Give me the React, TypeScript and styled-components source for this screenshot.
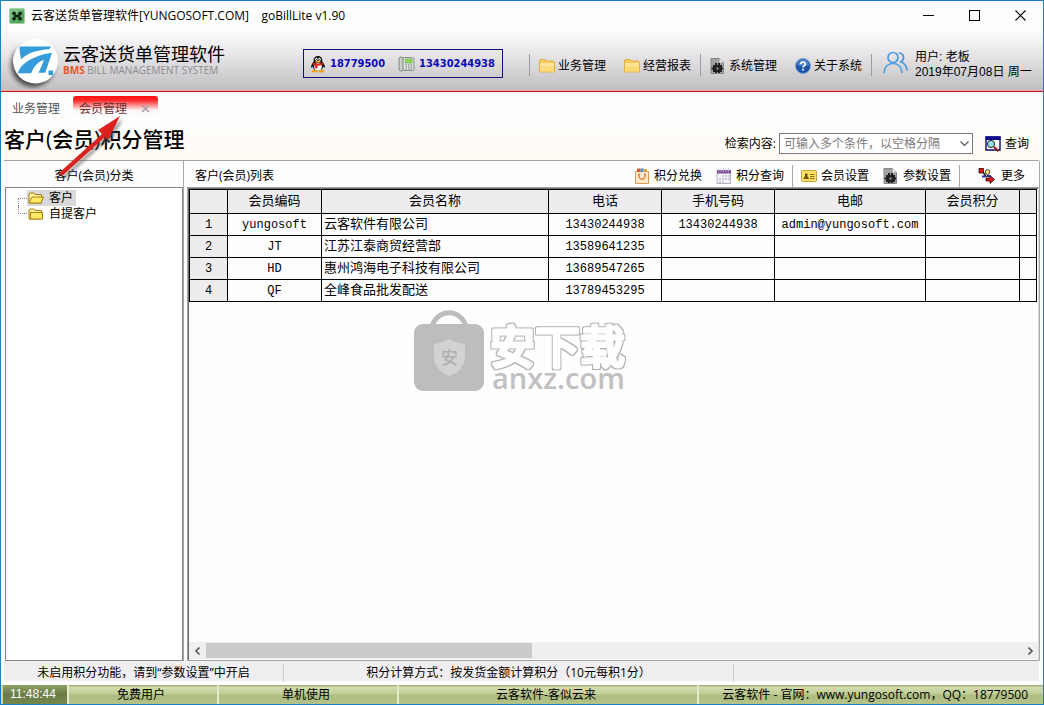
import React from "react";
import styled, { createGlobalStyle } from "styled-components";

const uiFont = `"Open Sans", "Noto Sans CJK SC", sans-serif`;
const sansFont = `"Liberation Sans", "Noto Sans CJK SC", sans-serif`;
const monoFont = `"Liberation Mono", "Noto Sans CJK SC", monospace`;

const GlobalStyle = createGlobalStyle`
  *, *::before, *::after { box-sizing: border-box; }
  body { margin: 0; background: #fff; }
  button, select, input { font: inherit; color: inherit; }
  button { border: 0; padding: 0; background: none; cursor: pointer; }
  svg { display: block; flex: none; }
`;

const Window = styled.div`
  position: relative;
  display: flex;
  flex-direction: column;
  min-height: 100vh;
  border: 1px solid #1a7fc4;
  background: #fefefe;
  color: #000;
  font: 12px/16px ${uiFont};
`;

/* ---------- title bar ---------- */
const TitleBar = styled.div`
  display: flex;
  align-items: center;
  height: 29px;
  padding-left: 8px;
  gap: 6px;
`;
const WindowTitle = styled.div`
  flex: 1;
  white-space: pre;
`;
const WindowButton = styled.button`
  display: flex;
  align-items: center;
  justify-content: center;
  width: 46px;
  height: 29px;
  margin-left: -6px;
  &:first-of-type { margin-left: 0; }
`;

/* ---------- header ---------- */
const Header = styled.header`
  display: flex;
  align-items: center;
  height: 62px;
  background: linear-gradient(#fdfdfe, #e4e2e5 45%, #bfbdc0);
  border-bottom: 1px solid #c01c1c;
  box-shadow: inset 0 -1px #f0a4a6;
`;
const Brand = styled.div`
  display: flex;
  align-items: center;
  gap: 3px;
  width: 302px;
  padding-left: 5px;
`;
const BrandText = styled.div`
  display: flex;
  flex-direction: column;
  padding-bottom: 2px;
`;
const BrandName = styled.div`
  font-size: 18px;
  line-height: 20px;
`;
const BrandSub = styled.div`
  font: 10px/12px ${uiFont};
  color: #8d8b8e;
  b { color: #e8562a; }
`;
const Contact = styled.div`
  display: flex;
  align-items: center;
  height: 29px;
  margin: 6px auto 0 0;
  padding: 0 7px 0 6px;
  border: 1px solid #10107c;
  color: #0a0ab8;
  font: bold 11px/16px "DejaVu Sans Condensed", "DejaVu Sans", sans-serif;
  font-stretch: condensed;
`;
const ContactItem = styled.span`
  display: flex;
  align-items: center;
  gap: 4px;
  & + & { margin-left: 13px; }
`;
const Menu = styled.nav`
  display: flex;
  align-items: center;
  margin-top: 8px;
`;
const MenuButton = styled.button`
  display: flex;
  align-items: center;
  gap: 3px;
  padding: 2px 9px 0;
  white-space: nowrap;
`;
const Divider = styled.span`
  width: 1px;
  height: 22px;
  background: #9c9a9e;
`;
const User = styled.div`
  display: flex;
  align-items: center;
  gap: 7px;
  padding: 4px 0 0 11px;
`;
const UserText = styled.div`
  width: 128px;
  padding-top: 4px;
  font: 12px/15px ${sansFont};
  white-space: nowrap;
`;

/* ---------- page tabs ---------- */
const Tabs = styled.div`
  display: flex;
  align-items: flex-start;
  height: 27px;
  padding: 4px 0 0 4px;
`;
const Tab = styled.button<{ $active?: boolean }>`
  display: flex;
  align-items: center;
  gap: 14px;
  height: 22px;
  padding: 3px 7px 0;
  border-radius: 3px 3px 0 0;
  color: ${(p) => (p.$active ? "#6b3030" : "#555")};
  background: ${(p) => (p.$active ? "linear-gradient(#fe0f10, #fc2a2a 20%, #fef6f6 65%, #fefefe)" : "none")};
  & + & { margin-left: 6px; padding-left: 6px; }
`;

/* ---------- heading and search ---------- */
const Heading = styled.div`
  display: flex;
  align-items: center;
  justify-content: space-between;
  height: 42px;
  margin: 0 4px 0 3px;
  background: linear-gradient(#fefefe, #fffaf3);
  border-bottom: 1px solid #a3a1a4;
`;
const PageTitle = styled.h1`
  margin: 0;
  padding-bottom: 2px;
  font: 500 21px/28px ${uiFont};
`;
const Search = styled.form`
  display: flex;
  align-items: center;
  margin-right: 10px;
  padding-top: 8px;
`;
const SelectBox = styled.div`
  position: relative;
  width: 194px;
  margin: 0 12px 0 3px;
  svg { position: absolute; right: 4px; top: 7px; pointer-events: none; }
`;
const Select = styled.select`
  display: block;
  width: 100%;
  height: 21px;
  padding: 0 16px 0 4px;
  border: 1px solid #7c7a7d;
  border-radius: 0;
  background: #fff;
  color: #7b797c;
  appearance: none;
`;
const IconButton = styled.button`
  display: flex;
  align-items: center;
  gap: 4px;
  white-space: nowrap;
`;

/* ---------- work area ---------- */
const Work = styled.main`
  display: grid;
  grid-template-columns: 180px minmax(0, 1fr);
  column-gap: 3px;
  flex: 1;
  margin: 0 3px;
`;
const Panel = styled.section<{ $last?: boolean }>`
  display: flex;
  flex-direction: column;
  border-right: 1px solid #a9a7aa;
  padding-left: ${(p) => (p.$last ? 0 : 1)}px;
`;
const PanelHead = styled.div<{ $center?: boolean }>`
  display: flex;
  align-items: center;
  justify-content: ${(p) => (p.$center ? "center" : "flex-start")};
  height: 26px;
  padding-left: ${(p) => (p.$center ? 0 : 8)}px;
  padding-top: 3px;
`;
const TreeBox = styled.div`
  flex: 1;
  border: 1px solid #858387;
  background: #fff;
`;
const Tree = styled.ul`
  list-style: none;
  margin: 0;
  padding: 2px 0 0 12px;
`;
const TreeRow = styled.li`
  display: flex;
  height: 16px;
`;
const Branch = styled.span<{ $end?: boolean }>`
  width: 9px;
  height: 8px;
  align-self: ${(p) => (p.$end ? "flex-start" : "flex-end")};
  border-left: 1px dotted #888;
  border-top: ${(p) => (p.$end ? 0 : 1)}px dotted #888;
  border-bottom: ${(p) => (p.$end ? 1 : 0)}px dotted #888;
`;
const TreeButton = styled.button<{ $on?: boolean }>`
  display: flex;
  align-items: center;
  gap: 5px;
  padding: 0 3px 0 1px;
  line-height: 16px;
  background: ${(p) => (p.$on ? "#d9d8da" : "none")};
`;
const Tools = styled.div`
  display: flex;
  align-items: center;
  margin-left: auto;
`;
const Tool = styled.button<{ $more?: boolean }>`
  display: flex;
  align-items: center;
  gap: ${(p) => (p.$more ? 6 : 4)}px;
  padding: ${(p) => (p.$more ? "0 14px 0 17px" : "0 7px")};
  white-space: nowrap;
`;
const ToolDivider = styled(Divider)`
  margin: 0 1px;
  background: #a9a7aa;
`;
const Grid = styled.div`
  position: relative;
  display: flex;
  flex-direction: column;
  flex: 1;
  border: 1px solid #a3a1a4;
  border-right-color: #dddbde;
  box-shadow: inset 1px 1px #6b696c;
  padding: 1px 0 0 1px;
  background: #fefefe;
`;
const GridView = styled.div`
  flex: 1;
  overflow: hidden;
  padding-right: 1px;
`;
const Table = styled.table`
  width: 100%;
  table-layout: fixed;
  border-collapse: collapse;
  font: 12px/16px ${monoFont};
  th, td {
    height: 22px;
    padding: 0 2px;
    border: 1px solid #000;
    text-align: center;
    font-weight: 400;
    white-space: nowrap;
    overflow: hidden;
  }
  th { background: #eeecef; }
  thead th { height: 24px; font-size: 13px; }
  td:nth-child(3) { text-align: left; font-size: 13px; }
`;
const ScrollBar = styled.div`
  display: grid;
  grid-template-columns: 17px minmax(0, 1fr) 17px;
  height: 17px;
  margin-bottom: 1px;
  background: #f0eef1;
  button { display: flex; align-items: center; justify-content: center; }
`;
const Thumb = styled.div`
  width: 40%;
  height: 15px;
  margin-top: 1px;
  background: #cccacd;
`;
const Watermark = styled.svg`
  position: absolute;
  left: 224px;
  top: 122px;
  pointer-events: none;
`;

/* ---------- status bars ---------- */
const Notes = styled.div`
  display: grid;
  grid-template-columns: 279px 450px minmax(0, 1fr);
  height: 20px;
  margin: 0 4px 4px 3px;
  padding: 3px 0 1px;
  background: #f0eef1;
  text-align: center;
  line-height: 18px;
  span + span { border-left: 1px solid #cfcdd0; }
`;
const StatusBar = styled.footer`
  display: grid;
  grid-template-columns: 68px 150px 180px 300px minmax(0, 1fr);
  height: 19px;
  background: linear-gradient(#93a36a, #d2dcae 12%, #c2ce98 45%, #aebd80 55%, #b3c286);
  text-align: center;
  line-height: 19px;
  white-space: nowrap;
`;
const StatusCell = styled.span<{ $clock?: boolean }>`
  padding-right: 4px;
  border-right: 2px solid #e4ebcf;
  border-left: ${(p) => (p.$clock ? 2 : 0)}px solid #cdd8b0;
  color: ${(p) => (p.$clock ? "#fff" : "#000")};
  background: ${(p) => (p.$clock ? "linear-gradient(#8fa264, #6a7c45 50%, #74884c)" : "none")};
  font-family: ${(p) => (p.$clock ? sansFont : uiFont)};
  &:last-child { border-right: 0; padding-right: 15px; text-align: right; }
`;
const Pointer = styled.svg`
  position: absolute;
  left: 51px;
  top: 107px;
  pointer-events: none;
`;

/* ---------- icons ---------- */
const AppIcon = () => (
  <svg width="16" height="16" viewBox="0 0 16 16">
    <rect x="0.5" y="0.5" width="15" height="15" rx="1.5" fill="#55a95e" stroke="#a2cfa4" />
    <path d="M1 1h14L1 13z" fill="#86c98a" opacity=".7" />
    <g fill="#0c260f">
      <circle cx="5" cy="5.4" r="1.9" /><circle cx="11" cy="5.4" r="1.9" />
      <circle cx="5" cy="10.6" r="1.9" /><circle cx="11" cy="10.6" r="1.9" />
      <path d="M5 7l3-.4L11 7v2l-3 .4L5 9z" />
    </g>
  </svg>
);

const Logo = () => (
  <svg width="54" height="56" viewBox="0 0 54 56">
    <defs>
      <filter id="logoShadow" x="-20%" y="-20%" width="140%" height="140%"><feGaussianBlur stdDeviation="2" /></filter>
    </defs>
    <circle cx="27" cy="32" r="22" fill="#222" opacity=".75" filter="url(#logoShadow)" />
    <circle cx="29.5" cy="28" r="22.5" fill="#fff" />
    <g fill="#369bdb" transform="translate(-5.500 -34.500) scale(.3333)">
      <path d="M57 144H152L146 152C112 154 82 162 62 182 59 172 57 158 57 144z" />
      <path d="M154 163C148 185 140 205 134 223H114C122 206 127 196 130 184 112 190 100 205 92 224H52C56 210 64 201 72 195 92 180 120 167 154 163z" />
      <path d="M144 216h14v14h-14z" />
    </g>
  </svg>
);

const Penguin = () => (
  <svg width="16" height="18" viewBox="0 0 16 18">
    <path d="M8 1C4.6 1 3.6 3.4 3.7 6.2 2.4 8 1 10 .9 12.6c.6.4 1.2-.2 1.8-1C3.2 14.600 5 16 8 16s4.800-1.400 5.300-4.400c.6.8 1.200 1.400 1.800 1-.1-2.600-1.500-4.600-2.800-6.400C12.400 3.400 11.400 1 8 1z" fill="#15151a" />
    <ellipse cx="8" cy="12" rx="3.800" ry="3.700" fill="#fff" />
    <ellipse cx="6.500" cy="4.300" rx="1.200" ry="1.500" fill="#fff" /><ellipse cx="9.500" cy="4.300" rx="1.200" ry="1.500" fill="#fff" />
    <circle cx="6.800" cy="4.500" r=".6" /><circle cx="9.200" cy="4.500" r=".6" />
    <ellipse cx="8" cy="6.700" rx="2.800" ry="1" fill="#f7a51e" />
    <path d="M3.200 7.500c3 1.600 6.600 1.600 9.600 0l.6 1.700c-2 1-4 1.400-5.900 1.400v2.600H5.100v-3C4.200 9.900 3.300 9.600 2.600 9.200z" fill="#e3211c" />
    <ellipse cx="4.600" cy="16.200" rx="3" ry="1.300" fill="#f3a01c" /><ellipse cx="11.400" cy="16.200" rx="3" ry="1.300" fill="#f3a01c" />
  </svg>
);

const Phone = () => (
  <svg width="17" height="16" viewBox="0 0 17 16">
    <rect x="4.500" y="1.500" width="11.500" height="13" rx="1.500" fill="#dde1dd" stroke="#8b8f8b" />
    <rect x="1" y="1" width="4" height="14" rx="1.800" fill="#c9cec9" stroke="#7f837f" />
    <rect x="7.500" y="3" width="6.500" height="4" fill="#8fe04f" stroke="#6f9a52" strokeWidth=".6" />
    <g fill="#7a817b">
      {[8.500, 10.500, 12.500].map((y) => [7.500, 10, 12.500].map((x) => <rect key={`${x}-${y}`} x={x} y={y} width="1.500" height="1" />))}
    </g>
  </svg>
);

const Folder = () => (
  <svg width="16" height="16" viewBox="0 0 16 16">
    <path d="M.5 3q0-1.500 1.500-1.500h4L7.500 3H14q1.500 0 1.500 1.500V13q0 1-1 1h-13q-1 0-1-1z" fill="#f6cb5c" stroke="#e2b145" />
    <path d="M1 5h14v8.500H1z" fill="#fcda78" />
    <path d="M1 5h14v3H1z" fill="#fee69a" />
  </svg>
);

const GearDoc = () => (
  <svg width="16" height="16" viewBox="0 0 16 16">
    <path d="M1 .5h8.500L13.500 4.500V15.500H1z" fill="#a3a3a5" stroke="#858587" />
    <path d="M9.500 .5V4.500h4z" fill="#f2f2f4" stroke="#aaa" strokeWidth=".5" />
    <path d="M3 7h2V5h2v2h1V5h2v2h2v2.500h1v2h-1V14h-2v1H8v-1H7v1H5v-1H3v-2.500H1.500v-2H3z" fill="#202022" />
    <path d="M6.500 9.500h2v2h-2z" fill="#9b9b9d" />
  </svg>
);

const Help = () => (
  <svg width="16" height="16" viewBox="0 0 16 16">
    <circle cx="8" cy="8" r="7.500" fill="#1d55a8" stroke="#7d9fd0" />
    <path d="M2 7a6 6 0 0 1 12 0q-6 2.500-12 0z" fill="#5d92dc" opacity=".7" />
    <path d="M5.800 6.300c0-3 4.600-2.900 4.500-.2 0 1.600-2.200 1.700-2.200 3.400" fill="none" stroke="#fff" strokeWidth="1.700" />
    <rect x="7.200" y="10.700" width="1.800" height="1.800" fill="#fff" />
  </svg>
);

const Users = () => (
  <svg width="25" height="23" viewBox="0 0 25 23" fill="none" stroke="#4a9be0" strokeWidth="1.700" strokeLinecap="round">
    <circle cx="10" cy="6.500" r="5" />
    <path d="M1 21.500c.5-5.500 4-9 9-9s8.500 3.500 9 9" />
    <path d="M16.500 2c4.500.3 5.500 6.500 1.500 9 3.500 1.200 5.500 4 6 8" />
  </svg>
);

const SearchIcon = () => (
  <svg width="16" height="16" viewBox="0 0 16 16">
    <path d="M1 1h14v13H1z" fill="#fff" stroke="#0a0a6e" strokeWidth="1.400" />
    <path d="M.5 .5h15V4H.5z" fill="#0a0a8c" />
    <circle cx="6" cy="8" r="3.600" fill="#8ce0e6" stroke="#222" />
    <path d="M9 11l4.500 4.200" stroke="#a01818" strokeWidth="2.200" />
  </svg>
);

const Bag = () => (
  <svg width="16" height="16" viewBox="0 0 16 16">
    <path d="M1.500 3.500h13v12h-13z" fill="#fde8cc" stroke="#dd9a55" />
    <path d="M3 .5h3.500V4H3z" fill="#e0562c" /><path d="M6.500 .5h3V4h-3z" fill="#4c8fd0" /><path d="M9.500 1H13v3H9.500z" fill="#e8a23a" />
    <path d="M5 7c0 5.500 6 5.500 6 0" fill="none" stroke="#e07a34" strokeWidth="1.200" />
    <circle cx="5" cy="6.500" r="1" fill="#e07a34" /><circle cx="11" cy="6.500" r="1" fill="#e07a34" />
  </svg>
);

const CalendarIcon = () => (
  <svg width="16" height="16" viewBox="0 0 16 16">
    <rect x="1" y="2.500" width="13.500" height="13" fill="#f6f4f9" stroke="#b5b0c0" />
    <path d="M1 2h14v3.500H1z" fill="#7d539c" />
    <path d="M2.500 .5v3M5 .5v3M7.500 .5v3M10 .5v3M12.500 .5v3" stroke="#c9b5da" />
    <path d="M6 7h2v2H6zM9 7h2v2H9zM12 7h2v2h-2zM3 10h2v2H3zM6 10h2v2H6zM9 10h2v2H9zM12 10h2v2h-2zM3 13h2v2H3zM6 13h2v2H6z" fill="#cfcad8" />
  </svg>
);

const Card = () => (
  <svg width="16" height="16" viewBox="0 0 16 16">
    <rect x=".5" y="2.500" width="15" height="11" rx="1" fill="#fbe063" stroke="#c3a637" />
    <path d="M2.500 11q0-2 1.500-2.200V5.500h2.500v3.300Q8 9 8 11z" fill="#6a5310" />
    <path d="M9 6.500h4.500M9 8.500h4.500M9 10.500h4.500" stroke="#8a7020" />
  </svg>
);

const MoreIcon = () => (
  <svg width="17" height="16" viewBox="0 0 17 16">
    <path d="M1 .5h4.500V5H1z" fill="#e01414" stroke="#300" strokeWidth=".8" />
    <path d="M5.500 5l3 4" fill="none" stroke="#111" strokeWidth="1.400" />
    <circle cx="9.500" cy="4" r="2.300" fill="#ffe980" stroke="#111" strokeWidth=".8" />
    <path d="M4 7.500h3v2H4z" fill="#2430c8" /><path d="M9 7h3v2H9z" fill="#2430c8" />
    <path d="M8 10h4V7.500l4.500 4-4.500 4V13H8z" fill="#e01414" stroke="#300" strokeWidth=".8" />
  </svg>
);

const TreeFolder = ({ open }: { open?: boolean }) => (
  <svg width="16" height="16" viewBox="0 0 16 16">
    <path d="M1 13V4l1-1h4l1 1.500h6.500V13z" fill="#fff3a6" stroke="#a8830c" />
    {open ? (
      <path d="M1 13L4 7h11.500L13 13z" fill="#ffe866" stroke="#a8830c" />
    ) : (
      <path d="M2.500 6.500H14.500V13H2.500z" fill="#ffe866" stroke="#a8830c" />
    )}
  </svg>
);

const Chevron = ({ dir }: { dir: "left" | "right" }) => (
  <svg width="8" height="10" viewBox="0 0 8 10">
    <path d={dir === "left" ? "M5.500 1.500L2 5l3.500 3.500" : "M2.500 1.500L6 5 2.500 8.500"} fill="none" stroke="#5a585b" strokeWidth="1.700" />
  </svg>
);

/* ---------- data ---------- */
const columns = ["会员编码", "会员名称", "电话", "手机号码", "电邮", "会员积分", ""];
const columnWidths = [38, 94, 227, 113, 113, 151, 94];
const members = [
  ["yungosoft", "云客软件有限公司", "13430244938", "13430244938", "admin@yungosoft.com", "", ""],
  ["JT", "江苏江泰商贸经营部", "13589641235", "", "", "", ""],
  ["HD", "惠州鸿海电子科技有限公司", "13689547265", "", "", "", ""],
  ["QF", "全峰食品批发配送", "13789453295", "", "", "", ""],
];

export default function App() {
  return (
    <>
      <GlobalStyle />
      <Window lang="zh-CN">
        <TitleBar>
          <AppIcon />
          <WindowTitle>云客送货单管理软件[YUNGOSOFT.COM]{"    "}goBillLite v1.90</WindowTitle>
          <WindowButton aria-label="最小化">
            <svg width="11" height="11"><path d="M0 5.500h11" stroke="#000" /></svg>
          </WindowButton>
          <WindowButton aria-label="最大化">
            <svg width="11" height="11"><rect x=".5" y=".5" width="10" height="10" fill="none" stroke="#000" /></svg>
          </WindowButton>
          <WindowButton aria-label="关闭">
            <svg width="11" height="11"><path d="M.5 .5l10 10M10.500 .5l-10 10" stroke="#000" strokeWidth="1.100" /></svg>
          </WindowButton>
        </TitleBar>

        <Header>
          <Brand>
            <Logo />
            <BrandText>
              <BrandName>云客送货单管理软件</BrandName>
              <BrandSub><b>BMS</b> BILL MANAGEMENT SYSTEM</BrandSub>
            </BrandText>
          </Brand>
          <Contact>
            <ContactItem><Penguin />18779500</ContactItem>
            <ContactItem><Phone />13430244938</ContactItem>
          </Contact>
          <Menu>
            <Divider />
            <MenuButton><Folder />业务管理</MenuButton>
            <MenuButton><Folder />经营报表</MenuButton>
            <Divider />
            <MenuButton><GearDoc />系统管理</MenuButton>
            <MenuButton><Help />关于系统</MenuButton>
            <Divider />
          </Menu>
          <User>
            <Users />
            <UserText>用户: 老板<br />2019年07月08日 周一</UserText>
          </User>
        </Header>

        <Tabs>
          <Tab>业务管理</Tab>
          <Tab $active>
            会员管理
            <svg width="10" height="10"><path d="M1 1l7 7M8 1l-7 7" stroke="#a9a2a5" strokeWidth="1.700" /></svg>
          </Tab>
        </Tabs>

        <Heading>
          <PageTitle>客户(会员)积分管理</PageTitle>
          <Search onSubmit={(e) => e.preventDefault()}>
            <label htmlFor="terms">检索内容:</label>
            <SelectBox>
              <Select id="terms">
                <option>可输入多个条件，以空格分隔</option>
              </Select>
              <svg width="9" height="7"><path d="M.5 1.500l4 4 4-4" fill="none" stroke="#555" strokeWidth="1.200" /></svg>
            </SelectBox>
            <IconButton><SearchIcon />查询</IconButton>
          </Search>
        </Heading>

        <Work>
          <Panel>
            <PanelHead $center>客户(会员)分类</PanelHead>
            <TreeBox>
              <Tree>
                <TreeRow><Branch /><TreeButton $on><TreeFolder open />客户</TreeButton></TreeRow>
                <TreeRow><Branch $end /><TreeButton><TreeFolder />自提客户</TreeButton></TreeRow>
              </Tree>
            </TreeBox>
          </Panel>

          <Panel $last>
            <PanelHead>
              客户(会员)列表
              <Tools>
                <Tool><Bag />积分兑换</Tool>
                <Tool><CalendarIcon />积分查询</Tool>
                <ToolDivider />
                <Tool><Card />会员设置</Tool>
                <Tool><GearDoc />参数设置</Tool>
                <ToolDivider />
                <Tool $more><MoreIcon />更多</Tool>
              </Tools>
            </PanelHead>
            <Grid>
              <GridView>
                <Table>
                  <colgroup>
                    {columnWidths.map((w, i) => <col key={i} width={w} />)}
                    <col />
                  </colgroup>
                  <thead>
                    <tr>
                      <th />
                      {columns.map((c, i) => <th key={i} scope="col">{c}</th>)}
                    </tr>
                  </thead>
                  <tbody>
                    {members.map((row, r) => (
                      <tr key={r}>
                        <th scope="row">{r + 1}</th>
                        {row.map((cell, i) => <td key={i}>{cell}</td>)}
                      </tr>
                    ))}
                  </tbody>
                </Table>
              </GridView>
              <ScrollBar>
                <button aria-label="向左滚动"><Chevron dir="left" /></button>
                <Thumb />
                <button aria-label="向右滚动"><Chevron dir="right" /></button>
              </ScrollBar>
              <Watermark width="220" height="90" viewBox="0 0 220 90">
                <defs>
                  <filter id="outline" x="-5%" y="-10%" width="110%" height="120%">
                    <feMorphology in="SourceAlpha" operator="dilate" radius="1" result="fat" />
                    <feFlood floodColor="#b0aeb0" />
                    <feComposite in2="fat" operator="in" />
                    <feMerge><feMergeNode /><feMergeNode in="SourceGraphic" /></feMerge>
                  </filter>
                </defs>
                <path d="M19 20C23 -3 51 -3 55 20" fill="none" stroke="#bebdbe" strokeWidth="5" />
                <rect x="2" y="14" width="70" height="67" rx="9" fill="#bebdbe" />
                <path d="M22 34q9-1 15-5 6 4 16 5v14q-1 12-16 18-14-6-15-18z" fill="#d3d2d3" />
                <text x="29" y="54" fontFamily="Noto Sans CJK SC" fontSize="17" fontWeight="500" fill="#b0afb0">安</text>
                <text x="78" y="54" fontFamily="Noto Sans CJK SC" fontSize="45" fontWeight="500" fill="#fefefe" stroke="#fefefe" strokeWidth="3" strokeLinejoin="round" filter="url(#outline)">安下载</text>
                <text x="80" y="79" fontFamily="Open Sans" fontSize="29" fontWeight="600" fill="#c2c0c2">anxz.com</text>
              </Watermark>
            </Grid>
          </Panel>
        </Work>

        <Notes>
          <span>未启用积分功能，请到“参数设置”中开启</span>
          <span>积分计算方式：按发货金额计算积分（10元每积1分）</span>
          <span />
        </Notes>
        <StatusBar>
          <StatusCell $clock>11:48:44</StatusCell>
          <StatusCell>免费用户</StatusCell>
          <StatusCell>单机使用</StatusCell>
          <StatusCell>云客软件-客似云来</StatusCell>
          <StatusCell>云客软件 - 官网：www.yungosoft.com，QQ：18779500</StatusCell>
        </StatusBar>

        <Pointer width="80" height="76" viewBox="0 0 80 76">
          <defs>
            <filter id="soft" x="-10%" y="-10%" width="130%" height="130%"><feGaussianBlur stdDeviation="1.500" /></filter>
            <linearGradient id="red" x1="0" y1="0" x2="1" y2="1">
              <stop offset="0" stopColor="#ff3a30" /><stop offset="1" stopColor="#b80c0c" />
            </linearGradient>
          </defs>
          <path d="M68 8L56 32 53 29 10 68 7 65 50 26 46 22z" transform="translate(3 3)" fill="#555" opacity=".5" filter="url(#soft)" />
          <path d="M68 8L56 32 53 29 10 68 7 65 50 26 46 22z" fill="url(#red)" />
        </Pointer>
      </Window>
    </>
  );
}
